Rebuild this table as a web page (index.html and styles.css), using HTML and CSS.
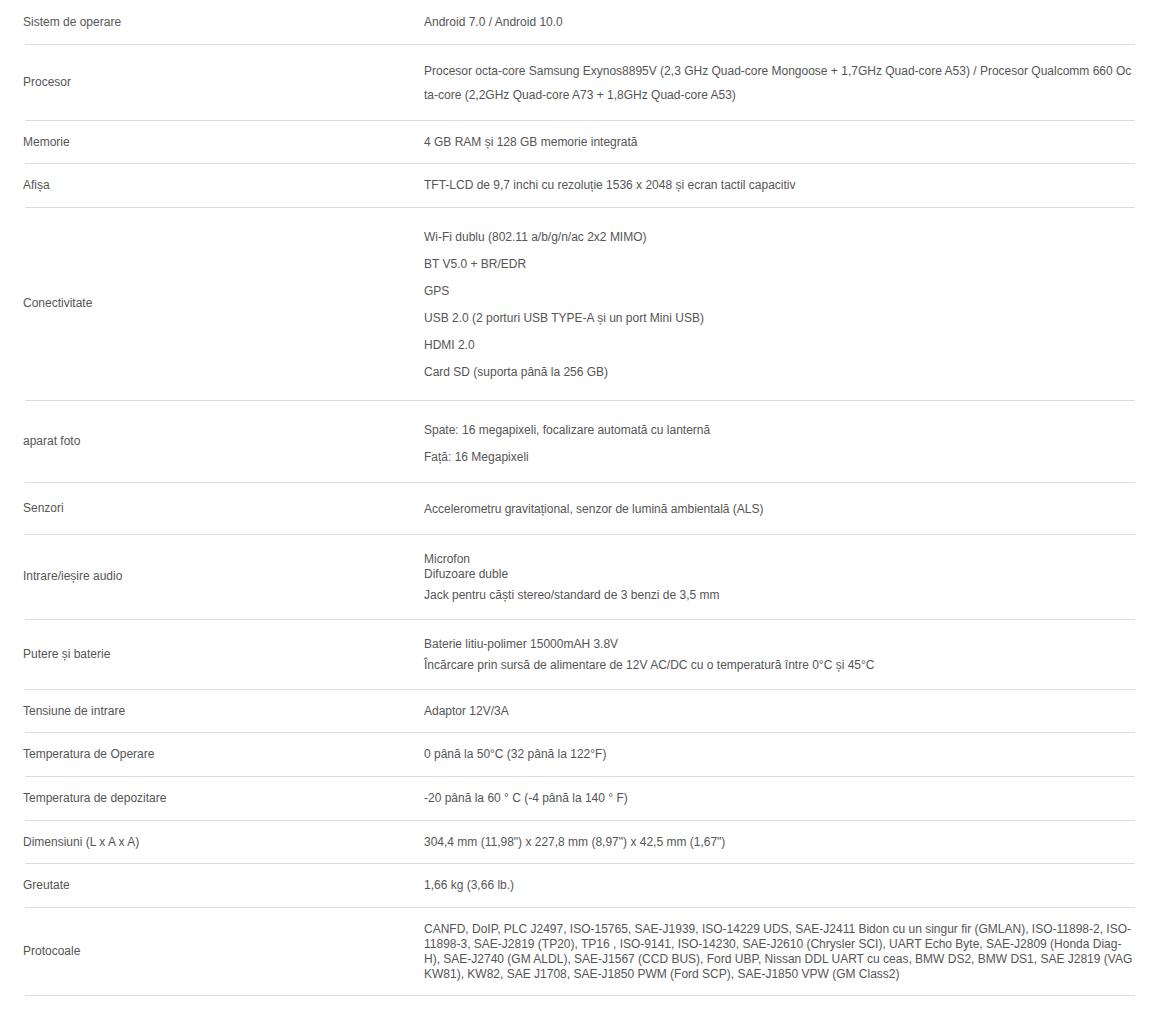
FILE: index.html
```html
<!DOCTYPE html>
<html lang="ro">
<head>
<meta charset="utf-8">
<title>Specificații</title>
<link rel="stylesheet" href="styles.css">
</head>
<body>
<div class="specs">
  <div class="spec-row">
    <div class="spec-label">Sistem de operare</div>
    <div class="spec-value">Android 7.0 / Android 10.0</div>
  </div>
  <div class="spec-row">
    <div class="spec-label">Procesor</div>
    <div class="spec-value tall break">Procesor octa-core Samsung Exynos8895V (2,3 GHz Quad-core Mongoose + 1,7GHz Quad-core A53) / Procesor Qualcomm 660 Octa-core (2,2GHz Quad-core A73 + 1,8GHz Quad-core A53)</div>
  </div>
  <div class="spec-row">
    <div class="spec-label">Memorie</div>
    <div class="spec-value">4 GB RAM și 128 GB memorie integrată</div>
  </div>
  <div class="spec-row">
    <div class="spec-label">Afișa</div>
    <div class="spec-value">TFT-LCD de 9,7 inchi cu rezoluție 1536 x 2048 și ecran tactil capacitiv</div>
  </div>
  <div class="spec-row">
    <div class="spec-label">Conectivitate</div>
    <div class="spec-value list">
      <p>Wi-Fi dublu (802.11 a/b/g/n/ac 2x2 MIMO)</p>
      <p>BT V5.0 + BR/EDR</p>
      <p>GPS</p>
      <p>USB 2.0 (2 porturi USB TYPE-A și un port Mini USB)</p>
      <p>HDMI 2.0</p>
      <p>Card SD (suporta până la 256 GB)</p>
    </div>
  </div>
  <div class="spec-row">
    <div class="spec-label">aparat foto</div>
    <div class="spec-value list list-end">
      <p>Spate: 16 megapixeli, focalizare automată cu lanternă</p>
      <p>Față: 16 Megapixeli</p>
    </div>
  </div>
  <div class="spec-row">
    <div class="spec-label">Senzori</div>
    <div class="spec-value tall">Accelerometru gravitațional, senzor de lumină ambientală (ALS)</div>
  </div>
  <div class="spec-row">
    <div class="spec-label">Intrare/ieșire audio</div>
    <div class="spec-value compact">
      <p>Microfon<br>Difuzoare duble</p>
      <p>Jack pentru căști stereo/standard de 3 benzi de 3,5 mm</p>
    </div>
  </div>
  <div class="spec-row">
    <div class="spec-label">Putere și baterie</div>
    <div class="spec-value compact">
      <p>Baterie litiu-polimer 15000mAH 3.8V</p>
      <p>Încărcare prin sursă de alimentare de 12V AC/DC cu o temperatură între 0°C și 45°C</p>
    </div>
  </div>
  <div class="spec-row">
    <div class="spec-label">Tensiune de intrare</div>
    <div class="spec-value">Adaptor 12V/3A</div>
  </div>
  <div class="spec-row">
    <div class="spec-label">Temperatura de Operare</div>
    <div class="spec-value">0 până la 50°C (32 până la 122°F)</div>
  </div>
  <div class="spec-row">
    <div class="spec-label">Temperatura de depozitare</div>
    <div class="spec-value">-20 până la 60 ° C (-4 până la 140 ° F)</div>
  </div>
  <div class="spec-row">
    <div class="spec-label">Dimensiuni (L x A x A)</div>
    <div class="spec-value">304,4 mm (11,98") x 227,8 mm (8,97") x 42,5 mm (1,67")</div>
  </div>
  <div class="spec-row">
    <div class="spec-label">Greutate</div>
    <div class="spec-value">1,66 kg (3,66 lb.)</div>
  </div>
  <div class="spec-row">
    <div class="spec-label">Protocoale</div>
    <div class="spec-value dense">CANFD, DoIP, PLC J2497, ISO-15765, SAE-J1939, ISO-14229 UDS, SAE-J2411 Bidon cu un singur fir (GMLAN), ISO-11898-2, ISO-11898-3, SAE-J2819 (TP20), TP16 , ISO-9141, ISO-14230, SAE-J2610 (Chrysler SCI), UART Echo Byte, SAE-J2809 (Honda Diag-H), SAE-J2740 (GM ALDL), SAE-J1567 (CCD BUS), Ford UBP, Nissan DDL UART cu ceas, BMW DS2, BMW DS1, SAE J2819 (VAG KW81), KW82, SAE J1708, SAE-J1850 PWM (Ford SCP), SAE-J1850 VPW (GM Class2)</div>
  </div>
</div>
</body>
</html>
```

FILE: styles.css
```css
html, body {
  margin: 0;
  padding: 0;
  background: #ffffff;
}

body {
  font-family: "Liberation Sans", Arial, sans-serif;
  font-size: 12px;
  color: #555555;
}

.specs {
  margin: 1px 0 0 23px;
  width: 1112px;
}

.spec-row {
  display: grid;
  grid-template-columns: 399px 1fr;
  margin-left: 2px;
  border-bottom: 1px solid #dddddd;
}

.spec-label {
  margin-left: -2px;
  align-self: center;
  line-height: 15.6px;
  padding: 14px 0 13px;
}

.spec-value {
  padding: 14px 2px 13px 0;
  line-height: 15.6px;
}

.spec-value p {
  margin: 0;
}

.spec-value.tall {
  line-height: 24px;
}

.spec-value.break {
  word-break: break-all;
}

.spec-value.list p {
  line-height: 24px;
  margin: 3px 0;
}

.spec-value.list-end p:last-child {
  margin-bottom: 0;
}

.spec-value.compact p {
  line-height: 15px;
  margin: 3px 0;
}

.spec-value.compact p + p {
  margin-top: 6px;
}

.spec-value.dense {
  line-height: 15px;
}
```
